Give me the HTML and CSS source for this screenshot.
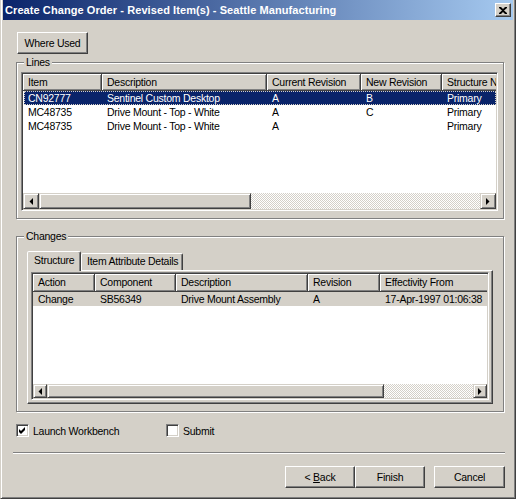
FILE: index.html
```html
<!DOCTYPE html>
<html>
<head>
<meta charset="utf-8">
<link rel="stylesheet" href="styles.css">
</head>
<body>
<div class="window">
  <div class="titlebar">
    <span class="title">Create Change Order - Revised Item(s) - Seattle Manufacturing</span>
    <span class="close"><svg width="8" height="7" viewBox="0 0 8 7"><path d="M0 0h2l2 2 2-2h2v1L5 3.5 8 6v1H6L4 5 2 7H0V6l3-2.5L0 1z" fill="#000"/></svg></span>
  </div>
  <div class="content">
    <div class="toolbar"><div class="btn where">Where Used</div></div>

    <div class="group lines">
      <span class="legend">Lines</span>
      <div class="listview lv-lines">
        <div class="lv-header">
          <div class="hcell" style="width:79px">Item</div>
          <div class="hcell" style="width:165px">Description</div>
          <div class="hcell" style="width:94px">Current Revision</div>
          <div class="hcell" style="width:81px">New Revision</div>
          <div class="hcell" style="width:80px">Structure Name</div>
        </div>
        <div class="lv-body">
          <div class="row selected">
            <div class="cell" style="width:79px">CN92777</div>
            <div class="cell" style="width:165px">Sentinel Custom Desktop</div>
            <div class="cell" style="width:94px">A</div>
            <div class="cell" style="width:81px">B</div>
            <div class="cell" style="width:80px">Primary</div>
          </div>
          <div class="row">
            <div class="cell" style="width:79px">MC48735</div>
            <div class="cell" style="width:165px">Drive Mount - Top - White</div>
            <div class="cell" style="width:94px">A</div>
            <div class="cell" style="width:81px">C</div>
            <div class="cell" style="width:80px">Primary</div>
          </div>
          <div class="row">
            <div class="cell" style="width:79px">MC48735</div>
            <div class="cell" style="width:165px">Drive Mount - Top - White</div>
            <div class="cell" style="width:94px">A</div>
            <div class="cell" style="width:81px"></div>
            <div class="cell" style="width:80px">Primary</div>
          </div>
        </div>
        <div class="hscroll">
          <div class="sb-btn"><svg width="4" height="7" viewBox="0 0 4 7"><path d="M4 0v7L0.5 3.5z" fill="#000"/></svg></div>
          <div class="sb-thumb" style="width:212px"></div>
          <div class="sb-track"></div>
          <div class="sb-btn"><svg width="4" height="7" viewBox="0 0 4 7"><path d="M0 0v7l3.5-3.5z" fill="#000"/></svg></div>
        </div>
      </div>
    </div>

    <div class="group changes">
      <span class="legend">Changes</span>
      <div class="tabs">
        <div class="tab active">Structure</div>
        <div class="tab">Item Attribute Details</div>
      </div>
      <div class="tabpanel">
        <div class="listview lv-changes">
          <div class="lv-header">
            <div class="hcell" style="width:62px">Action</div>
            <div class="hcell" style="width:81px">Component</div>
            <div class="hcell" style="width:132px">Description</div>
            <div class="hcell" style="width:72px">Revision</div>
            <div class="hcell" style="width:120px">Effectivity From</div>
          </div>
          <div class="lv-body">
            <div class="row inactive-sel">
              <div class="cell" style="width:62px">Change</div>
              <div class="cell" style="width:81px">SB56349</div>
              <div class="cell" style="width:132px">Drive Mount Assembly</div>
              <div class="cell" style="width:72px">A</div>
              <div class="cell" style="width:120px">17-Apr-1997 01:06:38</div>
            </div>
          </div>
          <div class="hscroll small">
            <div class="sb-btn"><svg width="4" height="7" viewBox="0 0 4 7"><path d="M4 0v7L0.5 3.5z" fill="#000"/></svg></div>
            <div class="sb-thumb" style="width:337px"></div>
            <div class="sb-track"></div>
            <div class="sb-btn"><svg width="4" height="7" viewBox="0 0 4 7"><path d="M0 0v7l3.5-3.5z" fill="#000"/></svg></div>
          </div>
        </div>
      </div>
    </div>

    <div class="checks">
      <label class="check">
        <span class="box"><svg width="9" height="9" viewBox="0 0 9 9"><path d="M1 3l2 2 4-4v3L3 8 1 6z" fill="#000"/></svg></span>
        <span>Launch Workbench</span>
      </label>
      <label class="check">
        <span class="box"></span>
        <span>Submit</span>
      </label>
    </div>

    <div class="separator"></div>

    <div class="actions">
      <div class="btn nav"><span>&lt; <u>B</u>ack</span></div>
      <div class="btn nav"><span>Finish</span></div>
      <div class="btn nav cancel"><span>Cancel</span></div>
    </div>
  </div>
</div>
</body>
</html>
```
FILE: styles.css
```css
* { box-sizing: border-box; }
html, body { margin: 0; padding: 0; }
body {
  width: 516px;
  height: 499px;
  overflow: hidden;
  background: #d4d0c8;
  font-family: "Liberation Sans", Arial, sans-serif;
  font-size: 10.5px;
  letter-spacing: -0.25px;
  color: #000;
}
.window {
  width: 516px;
  height: 499px;
  display: flex;
  flex-direction: column;
  background: #d4d0c8;
  border-left: 1px solid #d4d0c8;
  border-right: 1px solid #404040;
  border-bottom: 1px solid #404040;
  box-shadow: inset 1px 0 0 #fff, inset -1px -1px 0 #808080;
  padding: 0 2px 2px 2px;
}
.titlebar {
  height: 20px;
  flex: none;
  display: flex;
  align-items: center;
  justify-content: space-between;
  background: linear-gradient(to right, #0a246a, #a6caf0);
  padding: 0 2px 0 2px;
}
.title {
  color: #fff;
  font-weight: bold;
  font-size: 11px;
  letter-spacing: 0.08px;
  white-space: nowrap;
}
.close {
  width: 16px;
  height: 14px;
  display: flex;
  align-items: center;
  justify-content: center;
  background: #d4d0c8;
  border: 1px solid;
  border-color: #fff #404040 #404040 #fff;
  box-shadow: inset -1px -1px 0 #808080;
}
.content {
  flex: 1;
  display: flex;
  flex-direction: column;
  padding: 12px 9px 0 13px;
}
.toolbar { display: flex; padding-left: 1px; }
.btn {
  display: flex;
  align-items: center;
  justify-content: center;
  height: 22px;
  background: #d4d0c8;
  border: 1px solid;
  border-color: #fff #404040 #404040 #fff;
  box-shadow: inset -1px -1px 0 #808080;
  white-space: nowrap;
}
.btn.where { width: 71px; }

.group {
  position: relative;
  border: 1px solid #808080;
  box-shadow: inset 1px 1px 0 #fff, 1px 1px 0 #fff;
}
.legend {
  position: absolute;
  top: -7px;
  left: 7px;
  padding: 0 2px;
  background: #d4d0c8;
  line-height: 13px;
}
.group.lines {
  margin-top: 8px;
  padding: 9px 5px 7px 4px;
}
.group.changes {
  margin-top: 17px;
  padding: 14px 10px 7px 10px;
}

.listview {
  display: flex;
  flex-direction: column;
  background: #fff;
  border: 1px solid;
  border-color: #808080 #fff #fff #808080;
  box-shadow: inset 1px 1px 0 #404040, inset -1px -1px 0 #d4d0c8;
  padding: 1px;
  overflow: hidden;
}
.lv-lines { height: 139px; }
.lv-header {
  display: flex;
  flex: none;
  height: 17px;
  overflow: hidden;
}
.lv-changes .lv-header { height: 18px; }
.hcell {
  flex: none;
  height: 100%;
  line-height: 16px;
  padding-left: 5px;
  background: #d4d0c8;
  border-right: 1px solid #404040;
  border-bottom: 1px solid #404040;
  box-shadow: inset 1px 1px 0 #fff, inset -1px -1px 0 #808080;
  white-space: nowrap;
  overflow: hidden;
}
.lv-changes .hcell { line-height: 17px; }
.lv-body {
  flex: 1;
  overflow: hidden;
}
.row {
  display: flex;
  height: 14px;
  line-height: 14px;
  white-space: nowrap;
}
.row.selected {
  background: #0a246a;
  color: #fff;
  outline: 1px dotted #d4d0c8;
  outline-offset: -1px;
  margin-left: 1px;
}
.row.selected .cell:first-child { padding-left: 4px; width: 78px !important; }
.row.inactive-sel { background: #d4d0c8; }
.cell {
  flex: none;
  padding-left: 5px;
  overflow: hidden;
}

.hscroll {
  display: flex;
  flex: none;
  height: 16px;
}
.hscroll.small { height: 14px; }
.sb-btn {
  flex: none;
  width: 16px;
  height: 100%;
  display: flex;
  align-items: center;
  justify-content: center;
  background: #d4d0c8;
  border: 1px solid;
  border-color: #d4d0c8 #404040 #404040 #d4d0c8;
  box-shadow: inset 1px 1px 0 #fff, inset -1px -1px 0 #808080;
}
.hscroll.small .sb-btn { width: 14px; }
.sb-thumb {
  flex: none;
  height: 100%;
  background: #d4d0c8;
  border: 1px solid;
  border-color: #d4d0c8 #404040 #404040 #d4d0c8;
  box-shadow: inset 1px 1px 0 #fff, inset -1px -1px 0 #808080;
}
.sb-track {
  flex: 1;
  height: 100%;
  background: repeating-conic-gradient(#fff 0 25%, #d4d0c8 0 50%) 0 0 / 2px 2px;
}

.tabs {
  display: flex;
  align-items: flex-end;
  height: 19px;
  position: relative;
  z-index: 1;
}
.tab {
  height: 17px;
  line-height: 15px;
  padding: 0 4px 0 5px;
  background: #d4d0c8;
  border: 1px solid;
  border-bottom: none;
  border-color: #fff #404040 transparent #fff;
  box-shadow: inset -1px 0 0 #808080;
  border-radius: 2px 2px 0 0;
  white-space: nowrap;
}
.tab.active {
  height: 20px;
  margin-bottom: -1px;
  line-height: 17px;
  width: 54px;
  padding: 0 0 0 6px;
}
.tabpanel {
  height: 134px;
  border: 1px solid;
  border-color: #fff #404040 #404040 #fff;
  box-shadow: inset -1px -1px 0 #808080;
  padding: 1px 3px 3px 3px;
}
.lv-changes { height: 128px; }

.checks {
  display: flex;
  margin-top: 12px;
  height: 13px;
  align-items: center;
}
.check {
  display: flex;
  align-items: center;
  width: 150px;
  gap: 4px;
}
.box {
  width: 13px;
  height: 13px;
  flex: none;
  display: flex;
  align-items: center;
  justify-content: center;
  background: #fff;
  border: 1px solid;
  border-color: #808080 #fff #fff #808080;
  box-shadow: inset 1px 1px 0 #404040, inset -1px -1px 0 #d4d0c8;
}
.separator {
  margin: 15px -1px 0 -3px;
  height: 2px;
  border-top: 1px solid #808080;
  border-bottom: 1px solid #fff;
}
.actions {
  display: flex;
  justify-content: flex-end;
  margin-top: 12px;
  margin-right: -1px;
}
.btn.nav { width: 70px; }
.btn.cancel { margin-left: 9px; width: 71px; }
```
